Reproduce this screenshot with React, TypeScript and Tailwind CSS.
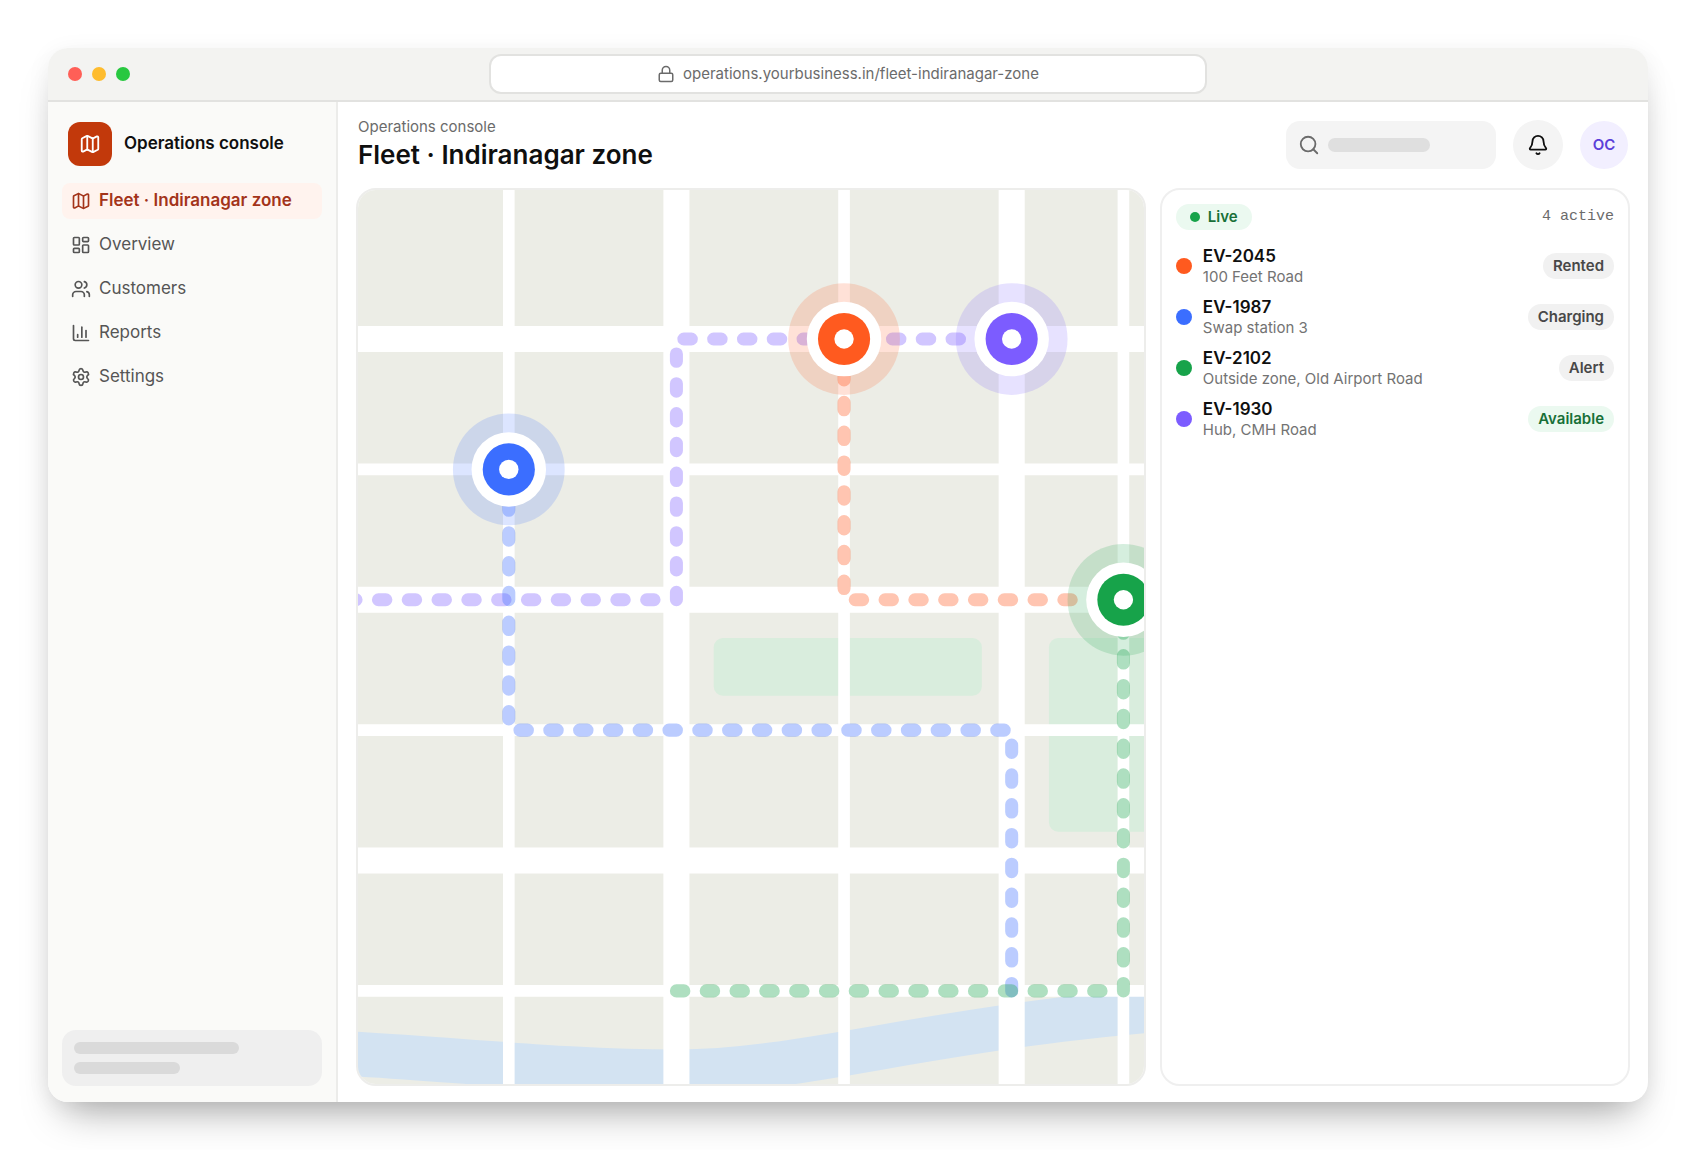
import type { ReactNode } from "react";
import { Bell, LayoutDashboard, Lock, Map, Search, Settings, Users } from "lucide-react";

interface Vehicle {
  id: string;
  place: string;
  status: string;
  dot: string;
  good?: boolean;
}

const vehicles: Vehicle[] = [
  { id: "EV-2045", place: "100 Feet Road", status: "Rented", dot: "bg-[#ff5a1f]" },
  { id: "EV-1987", place: "Swap station 3", status: "Charging", dot: "bg-[#3b6eff]" },
  { id: "EV-2102", place: "Outside zone, Old Airport Road", status: "Alert", dot: "bg-[#17a34a]" },
  { id: "EV-1930", place: "Hub, CMH Road", status: "Available", dot: "bg-[#7c5cff]", good: true },
];

const routes = [
  { d: "M4 44H52V16H88", color: "#7c5cff" },
  { d: "M104 44H70V16", color: "#ff5a1f" },
  { d: "M88 86V58H34V30", color: "#3b6eff" },
  { d: "M52 86H100V44", color: "#17a34a" },
];

const markers = [
  { x: 70, y: 16, color: "#ff5a1f" },
  { x: 34, y: 30, color: "#3b6eff" },
  { x: 100, y: 44, color: "#17a34a" },
  { x: 88, y: 16, color: "#7c5cff" },
];

function ChartIcon() {
  return (
    <svg className="size-5" viewBox="0 0 24 24" fill="none" stroke="currentColor" strokeWidth={2} strokeLinecap="round" strokeLinejoin="round">
      <path d="M3 3v16a2 2 0 0 0 2 2h16" />
      <path d="M18 17V9" />
      <path d="M13 17V5" />
      <path d="M8 17v-3" />
    </svg>
  );
}

function NavItem({ icon, label, active }: { icon: ReactNode; label: string; active?: boolean }) {
  return (
    <a
      href="#"
      aria-current={active ? "page" : undefined}
      className={
        active
          ? "flex h-9 items-center gap-2 rounded-lg bg-[#fff3ee] px-[9px] text-[17px] font-semibold text-[#a3341a]"
          : "flex h-9 items-center gap-2 rounded-lg px-[9px] text-[17px] text-[#555555]"
      }
    >
      {icon}
      {label}
    </a>
  );
}

function FleetMap() {
  return (
    <svg className="absolute inset-0 size-full" viewBox="0 0 120 96" preserveAspectRatio="xMidYMid slice" role="img" aria-label="Fleet map">
      <rect width="120" height="96" fill="#ecede6" />
      <path d="M0 92.2C20 92.2 36 94.7 52 94.7S84 88.1 120 87.1" fill="none" stroke="#d3e3f2" strokeWidth="4.8" />
      <rect x="56" y="48.1" width="28.8" height="6.2" rx="1" fill="#d9eddd" />
      <rect x="92" y="48.1" width="20" height="20.8" rx="1" fill="#d9eddd" />
      <g stroke="#ffffff" strokeWidth="1.25">
        <path d="M34 0V96M70 0V96M100 0V96" />
        <path d="M0 30H120M0 58H120M0 86H120" />
      </g>
      <g stroke="#ffffff" strokeWidth="2.8">
        <path d="M52 0V96M88 0V96" />
        <path d="M0 16H120M0 44H120M0 72H120" />
      </g>
      {routes.map((route) => (
        <path
          key={route.d}
          d={route.d}
          fill="none"
          stroke={route.color}
          strokeOpacity="0.35"
          strokeWidth="1.4"
          strokeLinecap="round"
          strokeLinejoin="round"
          strokeDasharray="0.8 2.4"
        />
      ))}
      {markers.map((m) => (
        <g key={m.color}>
          <circle cx={m.x} cy={m.y} r="6" fill={m.color} fillOpacity="0.18" />
          <circle cx={m.x} cy={m.y} r="4" fill="#ffffff" />
          <circle cx={m.x} cy={m.y} r="2.8" fill={m.color} />
          <circle cx={m.x} cy={m.y} r="1.04" fill="#ffffff" />
        </g>
      ))}
    </svg>
  );
}

export default function App() {
  return (
    <div className="h-screen bg-white p-12 font-['Inter',sans-serif] text-[17px] text-[#0f0f0f]">
      <div className="flex h-full flex-col overflow-hidden rounded-[20px] bg-white shadow-[0_24px_40px_-16px_rgba(0,0,0,0.35),0_4px_24px_rgba(0,0,0,0.06)]">
        <div className="flex h-[54px] shrink-0 items-center border-b-2 border-[#e2e2e0] bg-[#f3f3f1] px-5">
          <div className="flex flex-1 gap-2.5">
            <span className="size-3.5 rounded-full bg-[#ff5f57]" />
            <span className="size-3.5 rounded-full bg-[#febc2e]" />
            <span className="size-3.5 rounded-full bg-[#28c840]" />
          </div>
          <div className="flex h-10 w-[46%] items-center justify-center gap-2 rounded-xl border-2 border-[#e2e2e0] bg-white text-[15px] text-[#6b6b6b]">
            <Lock className="size-[18px]" />
            operations.yourbusiness.in/fleet-indiranagar-zone
          </div>
          <div className="flex-1" />
        </div>

        <div className="flex min-h-0 flex-1">
          <aside className="flex w-[290px] shrink-0 flex-col border-r-2 border-[#ececea] bg-[#fafaf8] px-3.5 pt-5 pb-4">
            <div className="flex items-center gap-3 px-1.5 font-semibold">
              <span className="flex size-11 items-center justify-center rounded-xl bg-[#c2390b] text-white">
                <Map className="size-[22px]" />
              </span>
              Operations console
            </div>
            <nav className="mt-[17px] flex flex-col gap-2">
              <NavItem icon={<Map className="size-5" />} label="Fleet · Indiranagar zone" active />
              <NavItem icon={<LayoutDashboard className="size-5" />} label="Overview" />
              <NavItem icon={<Users className="size-5" />} label="Customers" />
              <NavItem icon={<ChartIcon />} label="Reports" />
              <NavItem icon={<Settings className="size-5" />} label="Settings" />
            </nav>
            <div className="mt-auto flex flex-col gap-2 rounded-[14px] bg-[#efefef] p-3">
              <div className="h-3 w-[70%] rounded-full bg-[#dadada]" />
              <div className="h-3 w-[45%] rounded-full bg-[#dadada]" />
            </div>
          </aside>

          <main className="flex min-w-0 flex-1 flex-col px-[18px] pb-4">
            <header className="flex h-[86px] shrink-0 items-center justify-between px-0.5">
              <div>
                <p className="text-[15px] leading-5 text-[#6b6b6b]">Operations console</p>
                <h1 className="text-[26px] leading-9 font-semibold">Fleet · Indiranagar zone</h1>
              </div>
              <div className="flex items-center gap-[17px]">
                <label className="flex h-12 w-[210px] items-center gap-2 rounded-[14px] bg-[#f4f4f4] px-3 text-[#6b6b6b]">
                  <Search className="size-[22px] shrink-0" />
                  <span className="h-3.5 w-[102px] shrink-0 rounded-full bg-[#dfdfdf]" />
                  <input type="search" aria-label="Search" className="w-full min-w-0 bg-transparent outline-none" />
                </label>
                <button type="button" aria-label="Notifications" className="flex size-[50px] items-center justify-center rounded-full bg-[#f4f4f4]">
                  <Bell className="size-[22px]" />
                </button>
                <button type="button" className="size-12 rounded-full bg-[#f2efff] text-[15px] font-semibold text-[#5b3fd9]">
                  OC
                </button>
              </div>
            </header>

            <div className="grid min-h-0 flex-1 grid-cols-[1.68fr_1fr] gap-3.5">
              <section className="relative overflow-hidden rounded-[20px] border-2 border-[#ededeb]">
                <FleetMap />
              </section>

              <section className="rounded-[20px] border-2 border-[#efefef] p-3.5">
                <div className="flex h-[26px] items-center justify-between">
                  <span className="flex h-[26px] items-center gap-2 rounded-full bg-[#ebf9f0] px-3.5 text-[15px] font-semibold text-[#187038]">
                    <span className="size-2.5 rounded-full bg-[#17a34a]" />
                    Live
                  </span>
                  <span className="font-['Liberation_Mono',monospace] text-[15px] text-[#6b6b6b]">4 active</span>
                </div>
                <ul className="mt-[15px] flex flex-col gap-[9px]">
                  {vehicles.map((v) => (
                    <li key={v.id} className="flex items-center gap-[11px]">
                      <span className={`size-4 shrink-0 rounded-full ${v.dot}`} />
                      <div className="min-w-0 flex-1">
                        <p className="leading-[22px] font-semibold">{v.id}</p>
                        <p className="text-[15px] leading-5 text-[#737373]">{v.place}</p>
                      </div>
                      <span
                        className={
                          v.good
                            ? "flex h-[26px] items-center rounded-full bg-[#ebf9f0] px-2.5 text-[15px] font-semibold text-[#187038]"
                            : "flex h-[26px] items-center rounded-full bg-[#f1f1f1] px-2.5 text-[15px] font-semibold text-[#484848]"
                        }
                      >
                        {v.status}
                      </span>
                    </li>
                  ))}
                </ul>
              </section>
            </div>
          </main>
        </div>
      </div>
    </div>
  );
}
